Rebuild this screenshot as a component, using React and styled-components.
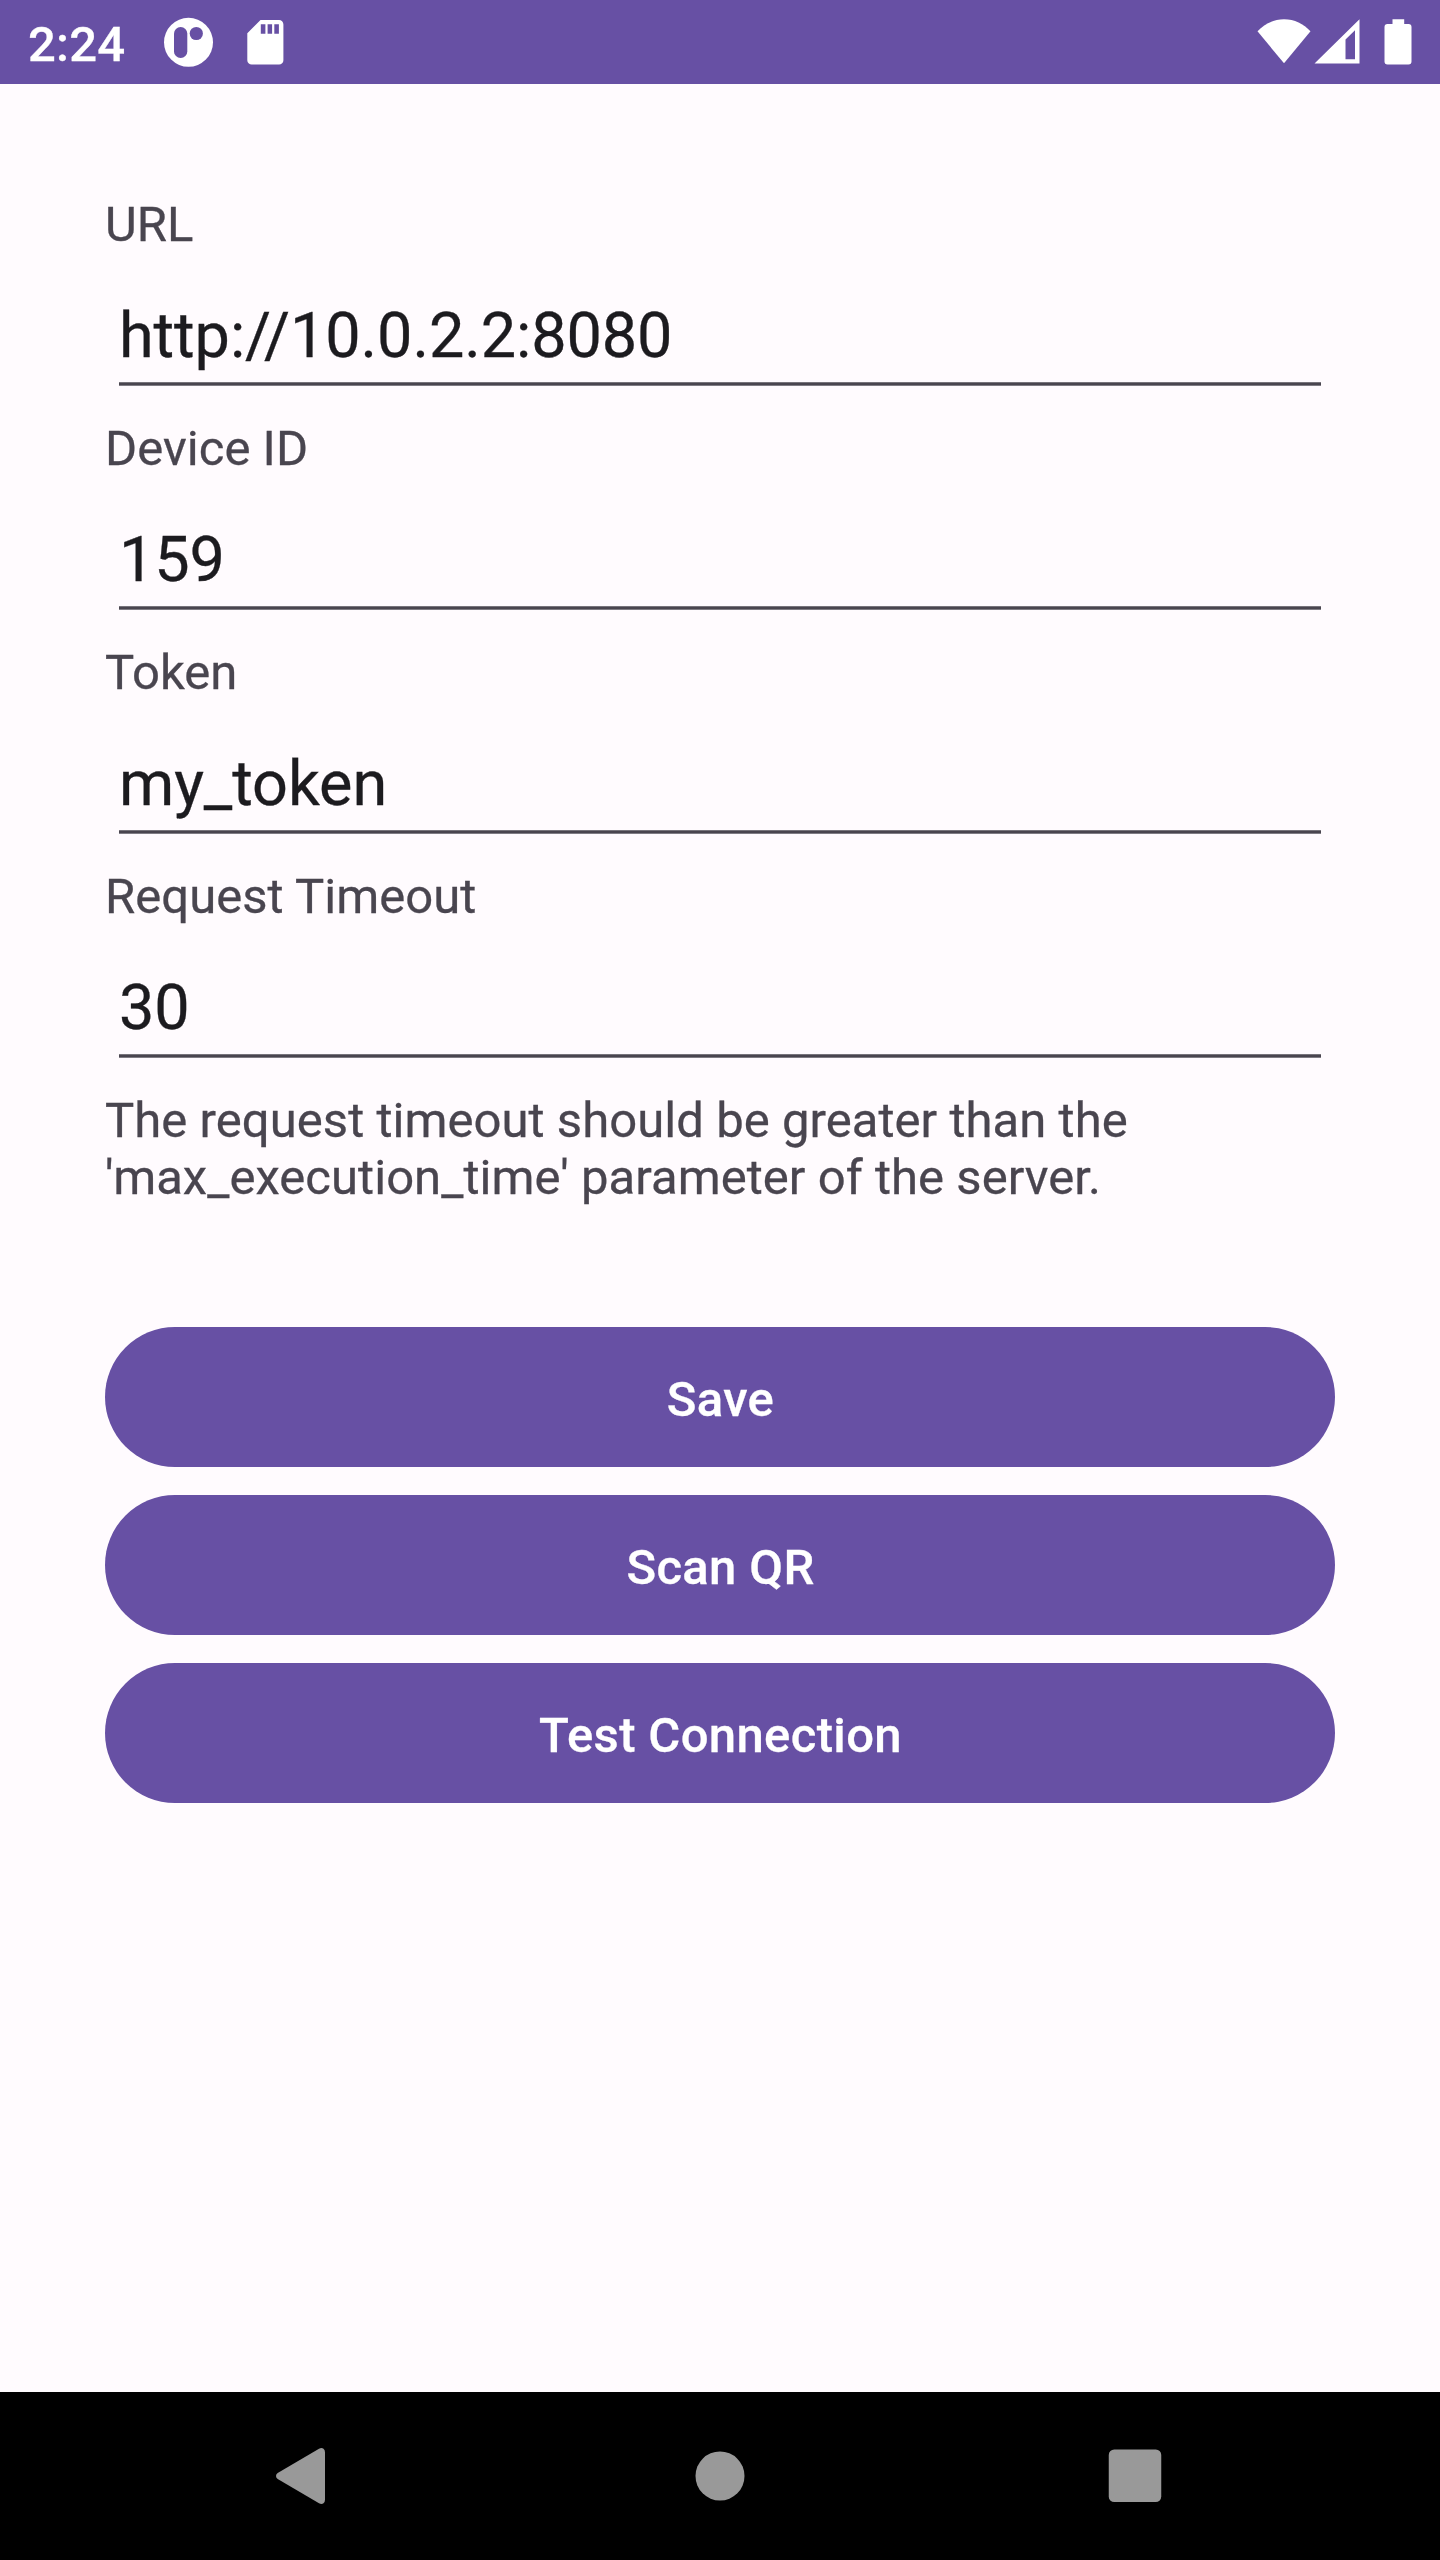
import React from "react";
import styled, { createGlobalStyle } from "styled-components";

const GlobalStyle = createGlobalStyle`
  *, *::before, *::after { box-sizing: border-box; }
  body { margin: 0; background: #fffbfe; }
`;

const Screen = styled.div`
  display: flex;
  flex-direction: column;
  width: 1440px;
  height: 2560px;
  background: #fffbfe;
  color: #49454f;
  font-family: Roboto, "Liberation Sans", sans-serif;
  font-size: 49px;
  line-height: 57px;
  -webkit-text-stroke: 0.3px currentColor;
`;

const StatusBar = styled.header`
  display: flex;
  align-items: center;
  justify-content: space-between;
  flex: none;
  height: 84px;
  padding: 0 28px;
  background: #6750a4;
  color: #fff;
`;

const StatusGroup = styled.div`
  display: flex;
  align-items: center;
`;

const Clock = styled.time`
  width: 136px;
  padding-top: 4px;
  font-weight: 500;
  letter-spacing: 0.2px;
  white-space: nowrap;
`;

const StatusIcon = styled.svg`
  display: block;
  flex: none;
  width: ${(p) => p.$w}px;
  height: 84px;
  margin-left: ${(p) => p.$gap || 0}px;
`;

const Main = styled.main`
  display: flex;
  flex-direction: column;
  flex: 1;
  padding: 112px 105px 0;
`;

const Field = styled.div`
  display: flex;
  flex-direction: column;
  height: 224px;
`;

const Label = styled.label`
  height: 57px;
  letter-spacing: 0.05px;
`;

const Input = styled.input`
  width: 1202px;
  height: 133px;
  margin: 0 14px;
  padding: 45px 0 14px;
  border: 0;
  border-radius: 0;
  outline: 0;
  background: linear-gradient(
      #77747b 0 1px,
      #49454f 1px 3px,
      #7f7c84 3px 4px
    )
    left bottom / 100% 4px no-repeat;
  color: #1c1b1f;
  font: 400 63px/74px Roboto, "Liberation Sans", sans-serif;
  letter-spacing: -0.1px;
`;

const Hint = styled.p`
  height: 114px;
  margin: 0;
  letter-spacing: 0.05px;
  white-space: pre-line;
`;

const Actions = styled.div`
  display: flex;
  flex-direction: column;
  gap: 28px;
  margin-top: 121px;
`;

const Button = styled.button`
  height: 140px;
  padding: 5px 0 0 1px;
  border: 0;
  border-radius: 70px;
  background: #6750a4;
  color: #fff;
  font: 500 49px/57px Roboto, "Liberation Sans", sans-serif;
  letter-spacing: 0.00714286em;
`;

const NavBar = styled.nav`
  display: flex;
  align-items: center;
  justify-content: space-between;
  flex: none;
  height: 168px;
  padding: 0 263px;
  background: #000;
`;

const NavIcon = styled.svg`
  display: block;
  width: 84px;
  height: 84px;
  fill: #999;
`;

const fields = [
  { id: "url", label: "URL", value: "http://10.0.2.2:8080" },
  { id: "device", label: "Device ID", value: "159" },
  { id: "token", label: "Token", value: "my_token" },
  { id: "timeout", label: "Request Timeout", value: "30" },
];

const actions = ["Save", "Scan QR", "Test Connection"];

function AppBadge() {
  return (
    <StatusIcon $w={49} viewBox="164 0 49 84">
      <circle cx="188.5" cy="42.3" r="24.5" fill="#fff" />
      <rect x="174" y="27" width="13.3" height="31" rx="6.6" fill="#6750a4" />
      <circle cx="196.3" cy="33.5" r="6.6" fill="#6750a4" />
    </StatusIcon>
  );
}

function SdCard() {
  return (
    <StatusIcon $w={37} $gap={34} viewBox="247 0 37 84">
      <path
        fill="#fff"
        fillRule="evenodd"
        d="M260.5 20H279a4.400 4.400 0 0 1 4.400 4.400V60.200a4.400 4.400 0 0 1-4.400 4.400H251.700a4.400 4.400 0 0 1-4.400-4.400V33.200ZM260.800 24.300v9.400h4.600v-9.400ZM267.600 24.300v9.400h4.500v-9.400ZM274.300 24.300v9.400h4.600v-9.400Z"
      />
    </StatusIcon>
  );
}

function Wifi() {
  return (
    <StatusIcon $w={54} viewBox="1257.500 0 54 84">
      <path fill="#fff" d="M1284.500 63.300 1258 31.300C1265 24 1274 19.300 1284.500 19.300S1304 24 1311 31.300Z" />
    </StatusIcon>
  );
}

function Signal() {
  return (
    <StatusIcon $w={46} $gap={3} viewBox="1314.500 0 46 84">
      <path fill="#fff" fillRule="evenodd" d="M1315 63.600 1360 19.300V63.600ZM1346 39.400V59.200H1355.500V30.300Z" />
    </StatusIcon>
  );
}

function Battery() {
  return (
    <StatusIcon $w={28} $gap={24} viewBox="1384.500 0 28 84">
      <path
        fill="#fff"
        d="M1393 19.300h11.700v4.700h4.300a3 3 0 0 1 3 3v34.600a3 3 0 0 1-3 3h-21a3 3 0 0 1-3-3V27a3 3 0 0 1 3-3h5Z"
      />
    </StatusIcon>
  );
}

export default function App() {
  return (
    <>
      <GlobalStyle />
      <Screen>
        <StatusBar>
          <StatusGroup>
            <Clock>2:24</Clock>
            <AppBadge />
            <SdCard />
          </StatusGroup>
          <StatusGroup>
            <Wifi />
            <Signal />
            <Battery />
          </StatusGroup>
        </StatusBar>
        <Main>
          {fields.map((f) => (
            <Field key={f.id}>
              <Label htmlFor={f.id}>{f.label}</Label>
              <Input id={f.id} defaultValue={f.value} />
            </Field>
          ))}
          <Hint>
            {"The request timeout should be greater than the\n'max_execution_time' parameter of the server."}
          </Hint>
          <Actions>
            {actions.map((a) => (
              <Button key={a}>{a}</Button>
            ))}
          </Actions>
        </Main>
        <NavBar>
          <NavIcon viewBox="263 2434 84 84">
            <path d="M277.700 2473 319 2448.700Q321.500 2447.300 323.500 2448.700Q325 2450 325 2452.500V2499.500Q325 2502 323.500 2503.300Q321.500 2504.700 319 2503.300L277.700 2479Q276 2477.800 276 2476T277.700 2473Z" />
          </NavIcon>
          <NavIcon viewBox="678 2434 84 84">
            <circle cx="720" cy="2476" r="24.500" />
          </NavIcon>
          <NavIcon viewBox="1093 2434 84 84">
            <rect x="1108.750" y="2449.500" width="52.500" height="52.500" rx="5.500" />
          </NavIcon>
        </NavBar>
      </Screen>
    </>
  );
}
